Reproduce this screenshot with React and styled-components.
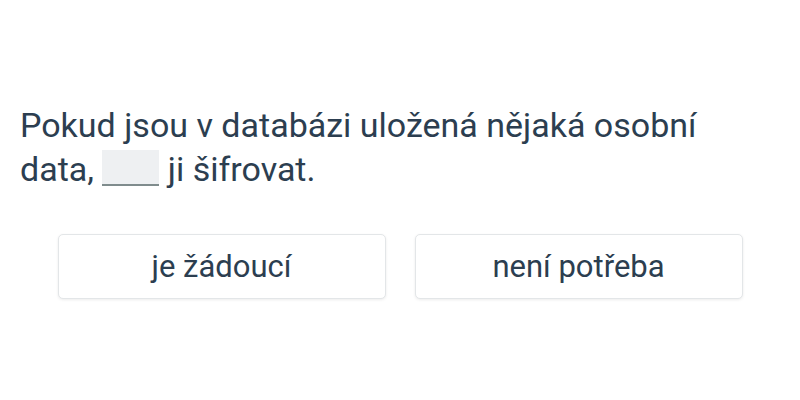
import styled, { createGlobalStyle } from "styled-components"

const Global = createGlobalStyle`
    body {
        margin: 0;
        background: #ffffff;
        font-family: Roboto, "Noto Sans", sans-serif;
        color: #2c3e50;
    }
`

const Page = styled.div`
    width: 800px;
    height: 400px;
    box-sizing: border-box;
    padding: 103px 20px 0 20px;
`

const Question = styled.p`
    margin: 0;
    font-size: 34px;
    line-height: 44px;
    color: #2c3e50;
    max-width: 720px;
`

const Blank = styled.span`
    display: inline-block;
    width: 57px;
    height: 34px;
    vertical-align: -5px;
    background: #eef0f2;
    border-bottom: 2px solid #7f8c8d;
`

const Choices = styled.div`
    display: grid;
    grid-template-columns: 328px 328px;
    gap: 29px;
    justify-content: center;
    margin-top: 43px;
`

const Choice = styled.button`
    height: 65px;
    padding: 0;
    background: #ffffff;
    border: 1px solid #e3e6e8;
    border-radius: 5px;
    box-shadow: 0 1px 3px rgba(0, 0, 0, 0.08);
    font-family: Roboto, "Noto Sans", sans-serif;
    font-size: 31px;
    color: #2c3e50;
    cursor: pointer;
`

const App = ()=>{
    const options = ["je žádoucí", "není potřeba"]

    return (
        <Page>
            <Global/>
            <Question>
                Pokud jsou v databázi uložená nějaká osobní data, <Blank/> ji šifrovat.
            </Question>
            <Choices>
                {options.map((opt)=>{
                    return <Choice key={opt}>{opt}</Choice>
                })}
            </Choices>
        </Page>
    )
}

export default App
